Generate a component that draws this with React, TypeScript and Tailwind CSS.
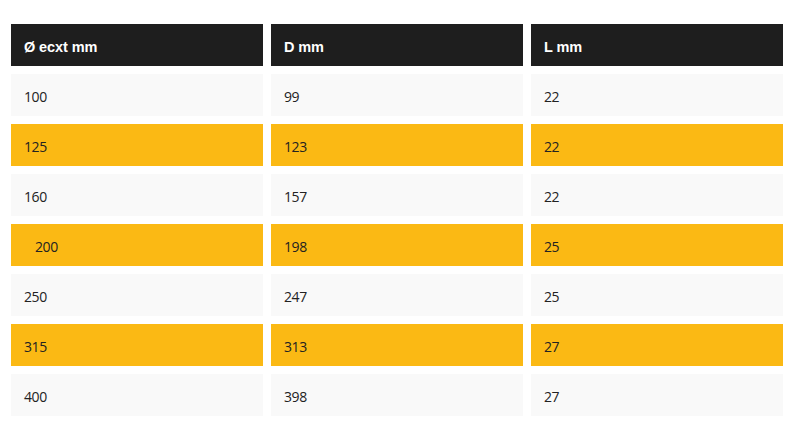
const rows: { cells: string[]; yellow: boolean; indent?: boolean }[] = [
  { cells: ["100", "99", "22"], yellow: false },
  { cells: ["125", "123", "22"], yellow: true },
  { cells: ["160", "157", "22"], yellow: false },
  { cells: ["200", "198", "25"], yellow: true, indent: true },
  { cells: ["250", "247", "25"], yellow: false },
  { cells: ["315", "313", "27"], yellow: true },
  { cells: ["400", "398", "27"], yellow: false },
];

const headers = ["Ø ecxt mm", "D mm", "L mm"];

export default function App() {
  return (
    <div className="h-[432px] w-[799px] bg-white pl-[11px] pr-[16px] pt-[24px]">
      <div className="grid grid-cols-3 gap-x-[8px] gap-y-[8px]">
        {headers.map((h) => (
          <div
            key={h}
            className="flex h-[42px] items-center bg-[#1e1e1e] pl-[13px] pt-[6px] font-['Liberation_Sans',Arial,sans-serif] text-[14.5px] font-bold tracking-[-0.1px] text-white"
          >
            {h}
          </div>
        ))}
        {rows.map((r) =>
          r.cells.map((c, i) => (
            <div
              key={r.cells[0] + "-" + i}
              className={`flex h-[42px] items-center pt-[3px] font-['Open_Sans',sans-serif] text-[14px] tracking-[-0.4px] text-[#222222] ${
                r.yellow ? "bg-[#fbb914]" : "bg-[#f9f9f9]"
              } ${r.indent && i === 0 ? "pl-[24px]" : "pl-[13px]"}`}
            >
              {c}
            </div>
          ))
        )}
      </div>
    </div>
  );
}
